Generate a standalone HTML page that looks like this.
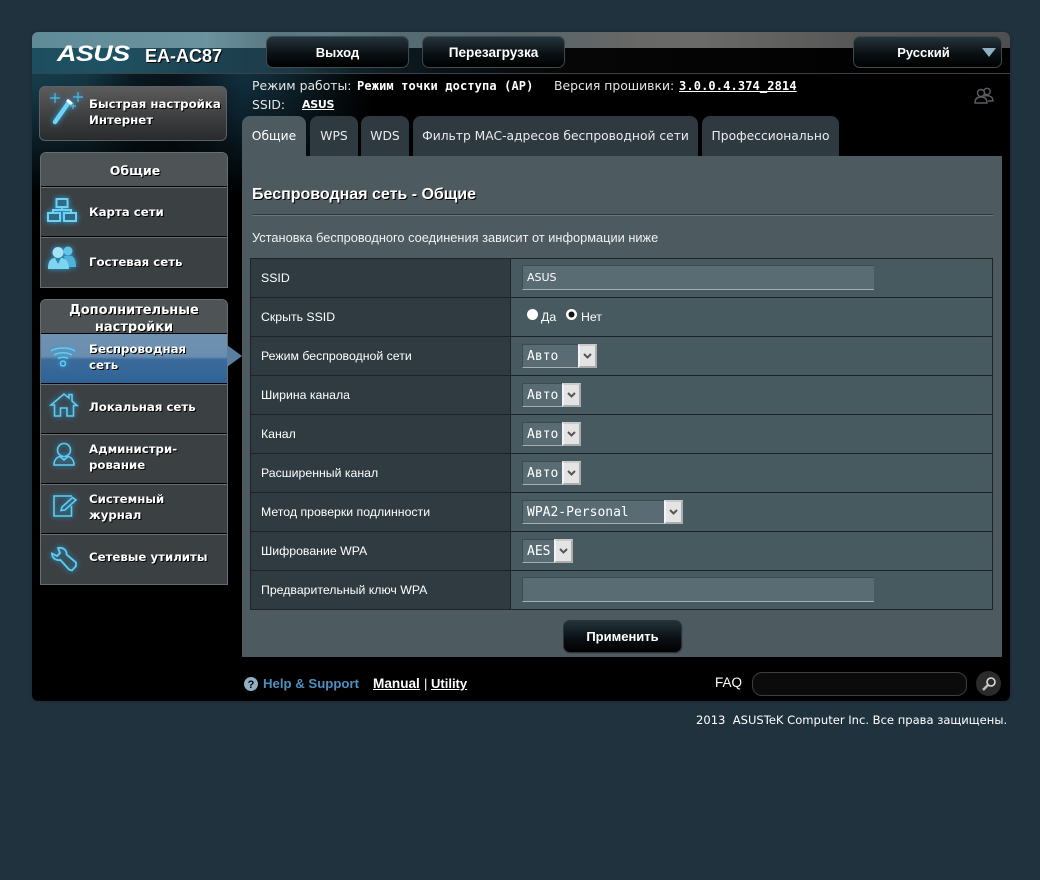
<!DOCTYPE html>
<html lang="ru"><head><meta charset="utf-8"><title>ASUS EA-AC87</title>
<style>
html,body{margin:0;padding:0;width:1040px;height:880px;overflow:hidden;background:#21323f}
body{position:relative;font-family:"Liberation Sans",sans-serif;color:#fff;font-size:12px}
.a{position:absolute;white-space:nowrap}
#wrap{position:absolute;left:32px;top:32px;width:978px;height:669px;background:#000;border-radius:6px;overflow:hidden;box-shadow:0 0 3px #1a2730}
#hdr{position:absolute;left:0;top:0;width:978px;height:41px;background:linear-gradient(90deg,#1c4e5f 0,#1f5263 8%,#1c4554 16%,#1d3d4a 24%,#1b3642 27%,#102229 33%,#0a1216 42%,#060606 55%,#000 100%)}
#hdr2{position:absolute;left:0;top:0;width:978px;height:16px;background:linear-gradient(90deg,#5f8b98 0,#6b929e 18%,#587680 25%,#5f7a83 30%,#566b72 38%,#566468 50%,#686866 62%,#6a6a68 68%,#565656 85%,#4f4f4f 100%)}
#glow{position:absolute;left:0;top:42px;width:340px;height:120px;background:linear-gradient(90deg,#163e4d 0,#143746 16%,#0a1a21 30%,#08141a 42%,#113040 62%,#0f2833 72%,#000 100%);-webkit-mask-image:linear-gradient(180deg,#000 0,rgba(0,0,0,.75) 30%,transparent 100%);mask-image:linear-gradient(180deg,#000 0,rgba(0,0,0,.75) 30%,transparent 100%)}
#line{position:absolute;left:0;top:41px;width:978px;height:1px;background:#3d4246}
.tb{position:absolute;top:36px;height:30px;border:1px solid #3d4a50;border-radius:7px;background:linear-gradient(180deg,#24343c 0,#0b1114 55%,#000 100%);text-align:center;line-height:31px;font-weight:bold;font-size:13px;color:#fff;box-sizing:content-box}
.mt{font:bold 11.75px/16px "DejaVu Sans",sans-serif;color:#fff;text-shadow:1px 1px 0 #000;position:absolute;white-space:nowrap}
.mh{font-size:13px}
.sep{position:absolute;left:41px;width:186px;height:1px;background:#000}
.sep2{position:absolute;left:41px;width:186px;height:1px;background:#6a6f72}
.tab{position:absolute;top:116px;height:40px;background:#2f3a40;border-radius:8px 8px 0 0;font:12.3px/40px "DejaVu Sans",sans-serif;color:#e8ecee;text-align:center}
.cellL{position:absolute;left:251px;width:259px;height:38px;background:#2f3b40}
.cellR{position:absolute;left:511px;width:481px;height:38px;background:#475a5f}
.lbl{position:absolute;left:261px;font:12.3px/14px "Liberation Sans",sans-serif;color:#fff;white-space:nowrap}
.sel{position:absolute;height:22px;background:#596c73;border-top:1px solid #3f4a4f;border-left:1px solid #3f4a4f;border-bottom:1px solid #a8aeb0;box-sizing:content-box;font:13px/24px "DejaVu Sans Mono",monospace;color:#fff;padding-left:4px}
.arr{position:absolute;top:-1px;right:0;width:19px;height:24px;background:#e4e4e4;border:2px solid #a9adae;border-top-color:#c9cccd;border-left-color:#f4f4f4;box-sizing:border-box}
.arr svg{position:absolute;left:3px;top:7px}
.inp{position:absolute;left:522px;width:352px;height:25px;box-sizing:border-box;background:#596c73;border-top:1px solid #3f4a4f;border-left:1px solid #3f4a4f;border-bottom:1px solid #a8aeb0}
svg{position:absolute;overflow:visible}
.ic{filter:drop-shadow(0 0 3px #2aa5e0)}
</style></head><body>
<div id="wrap"><div id="hdr"></div><div id="hdr2"></div><div id="glow"></div><div id="line"></div></div>

<!-- logo -->
<div class="a" style="left:57px;top:41px;font:italic bold 22px/26px 'Liberation Sans',sans-serif;transform:scaleX(1.22);transform-origin:left top;letter-spacing:-.4px;color:#fff">ASUS</div>
<div class="a" style="left:145px;top:45px;font:bold 18px/22px 'Liberation Sans',sans-serif;text-shadow:1px 1px 0 #000">EA-AC87</div>

<div class="tb" style="left:266px;width:141px">Выход</div>
<div class="tb" style="left:422px;width:141px;font-size:13.6px">Перезагрузка</div>
<div class="tb" style="left:853px;width:147px"><span style="margin-right:8px">Русский</span></div>
<svg style="left:982px;top:48px" width="14" height="9"><path d="M0 0H14L7 9Z" fill="#8fb0c4"/></svg>

<!-- status -->
<div class="a" style="left:252px;top:78px;font:12.4px/16px 'DejaVu Sans',sans-serif;color:#e6e6e6">Режим работы:</div>
<div class="a" style="left:357px;top:78px;font:bold 12px/16px 'DejaVu Sans Mono',monospace;color:#fff;letter-spacing:.13px">Режим точки доступа (AP)</div>
<div class="a" style="left:554px;top:78px;font:12.4px/16px 'DejaVu Sans',sans-serif;color:#e6e6e6">Версия прошивки:</div>
<div class="a" style="left:679px;top:78px;font:bold 12px/16px 'DejaVu Sans Mono',monospace;text-decoration:underline;letter-spacing:.13px">3.0.0.4.374_2814</div>
<div class="a" style="left:252px;top:97px;font:12.4px/16px 'DejaVu Sans',sans-serif;color:#e6e6e6">SSID:</div>
<div class="a" style="left:302px;top:97px;font:bold 11px/16px 'DejaVu Sans',sans-serif;text-decoration:underline;letter-spacing:-.3px">ASUS</div>
<svg style="left:974px;top:87px" width="20" height="18" fill="none" stroke="#5a5f62" stroke-width="1.4"><circle cx="13" cy="4.500" r="3.200"/><path d="M10 9C14 8 19 9 19 14H14"/><circle cx="7" cy="6" r="3.500" fill="#000"/><path d="M1 16C1 11 4 10 7 10S13 11 13 16Z" fill="#000"/></svg>

<!-- quick setup -->
<div class="a" style="left:39px;top:86px;width:186px;height:53px;border:1px solid #5c6163;border-radius:6px;background:linear-gradient(180deg,#5c5c5c 0,#3e3f40 55%,#2a2b2c 100%)"></div>
<svg class="ic" style="left:48px;top:90px" width="38" height="38"><path d="M7 32L21 12" stroke="#6fd3f5" stroke-width="4.500" stroke-linecap="round"/><path d="M19 10L24 14" stroke="#ffffff" stroke-width="3"/><path d="M7 3V13M2 8H12M30 2V12M25 7H35M25 13V19M22 16H28" stroke="#48bdea" stroke-width="1.200"/></svg>
<div class="mt" style="left:89px;top:96px">Быстрая настройка</div>
<div class="mt" style="left:89px;top:112px">Интернет</div>

<!-- menu 1 -->
<div class="a" style="left:40px;top:152px;width:186px;height:134px;background:#3b4043;border:1px solid #686d6f;border-radius:6px 6px 0 0"></div>
<div class="a" style="left:41px;top:153px;width:186px;height:33px;background:#4e5456;border-radius:6px 6px 0 0"></div>
<div class="sep" style="top:186px"></div><div class="sep2" style="top:187px"></div>
<div class="sep" style="top:236px"></div><div class="sep2" style="top:237px"></div>
<div class="mt" style="left:42px;width:186px;top:163px;text-align:center;font-size:12.5px">Общие</div>
<div class="mt" style="left:89px;top:204px">Карта сети</div>
<div class="mt" style="left:89px;top:254px">Гостевая сеть</div>
<svg class="ic" style="left:47px;top:198px" width="30" height="24" fill="none" stroke="#6fd0f2" stroke-width="2"><rect x="9.500" y="1" width="11" height="8" fill="#2f6a85"/><path d="M15 9V12M6 15V12H24V15"/><rect x="1" y="15" width="12" height="8" fill="#2f6a85"/><rect x="17" y="15" width="12" height="8" fill="#2f6a85"/></svg>
<svg class="ic" style="left:47px;top:246px" width="30" height="24"><circle cx="21" cy="5" r="4.500" fill="#63c4e6"/><path d="M17 10H25C28 12 29 16 29 21H20Z" fill="#4fb3d8"/><circle cx="11" cy="6.500" r="5.500" fill="#a5e3f7"/><path d="M1 23C1 15 4 12 8 12L11 18L14 12C18 12 22 15 22 23Z" fill="#7fd4f2"/></svg>

<!-- menu 2 -->
<div class="a" style="left:40px;top:299px;width:186px;height:284px;background:#3b4043;border:1px solid #686d6f;border-radius:6px 6px 0 0"></div>
<div class="a" style="left:41px;top:300px;width:186px;height:33px;background:#4e5456;border-radius:6px 6px 0 0"></div>
<div class="a" style="left:41px;top:300px;width:186px;height:33px;overflow:hidden"><div class="mt mh" style="left:0;width:186px;top:3px;text-align:center">Дополнительные</div><div class="mt mh" style="left:0;width:186px;top:20px;text-align:center">настройки</div></div>
<div class="sep" style="top:333px"></div>
<div class="a" style="left:41px;top:334px;width:186px;height:49px;background:linear-gradient(180deg,#6f92b2 0,#6b8eae 46%,#3c6b9b 52%,#2f6396 100%)"></div>
<svg style="left:227px;top:345px" width="15" height="22"><path d="M0 0L15 11L0 22Z" fill="#5a7f9f"/></svg>
<div class="sep" style="top:383px"></div><div class="sep2" style="top:384px"></div>
<div class="sep" style="top:433px"></div><div class="sep2" style="top:434px"></div>
<div class="sep" style="top:483px"></div><div class="sep2" style="top:484px"></div>
<div class="sep" style="top:533px"></div><div class="sep2" style="top:534px"></div>
<div class="mt" style="left:89px;top:341px">Беспроводная</div>
<div class="mt" style="left:89px;top:357px">сеть</div>
<svg class="ic" style="left:50px;top:347px" width="26" height="20" fill="none" stroke="#5fcdf2" stroke-width="1.600"><path d="M1 4C7 0 19 0 25 4"/><path d="M4 8C9 5 17 5 22 8"/><path d="M8 11.500C11 10 15 10 18 11.500"/><circle cx="13" cy="16.500" r="2.500"/></svg>
<div class="mt" style="left:89px;top:399px">Локальная сеть</div>
<svg class="ic" style="left:50px;top:393px" width="28" height="24" fill="none" stroke="#5fcdf2" stroke-width="1.600"><path d="M1 12L14 1L19 5V1.500H22V8L27 12.500H23.500V23H17V15H10.500V23H4.500V12Z"/></svg>
<div class="mt" style="left:89px;top:441px">Администри-</div>
<div class="mt" style="left:89px;top:457px">рование</div>
<svg class="ic" style="left:53px;top:443px" width="22" height="24" fill="none" stroke="#5fcdf2" stroke-width="1.600"><ellipse cx="11" cy="7" rx="6.500" ry="6.500"/><path d="M1 22C1 18 3 14.500 7 13.500L11 17L15 13.500C19 14.500 21 18 21 22Z"/></svg>
<div class="mt" style="left:89px;top:491px">Системный</div>
<div class="mt" style="left:89px;top:507px">журнал</div>
<svg class="ic" style="left:53px;top:495px" width="25" height="23" fill="none" stroke="#5fcdf2" stroke-width="1.600"><path d="M19 1H1V21H18.500V11"/><path d="M8 15.500L9 12L19.500 2.500L23 5L12 15Z"/></svg>
<div class="mt" style="left:89px;top:549px">Сетевые утилиты</div>
<svg class="ic" style="left:51px;top:547px" width="27" height="25" fill="none" stroke="#5fcdf2" stroke-width="1.800"><path d="M7 1C12 0 16 3 15.500 7.500L25 15.500V19L21 23.500L18 22.500L9.500 13C5 14 1 11 1 6.500L6 9L9 6Z"/></svg>

<!-- tabs -->
<div class="tab" style="left:242px;width:64px;background:#4d5a5f;color:#fff">Общие</div>
<div class="tab" style="left:310px;width:48px">WPS</div>
<div class="tab" style="left:361px;width:48px">WDS</div>
<div class="tab" style="left:413px;width:285px">Фильтр MAC-адресов беспроводной сети</div>
<div class="tab" style="left:702px;width:137px">Профессионально</div>

<!-- panel -->
<div class="a" style="left:242px;top:156px;width:760px;height:501px;background:#4d5a5f"></div>
<div class="a" style="left:252px;top:185px;font:bold 16px/20px 'Liberation Sans',sans-serif;text-shadow:1px 1px 0 #000">Беспроводная сеть - Общие</div>
<div class="a" style="left:252px;top:214px;width:741px;height:1px;background:#2f383c;border-bottom:1px solid #6d777b"></div>
<div class="a" style="left:252px;top:231px;font:12.8px/14px 'Liberation Sans',sans-serif;color:#f2f2f2">Установка беспроводного соединения зависит от информации ниже</div>

<!-- table -->
<div class="a" style="left:250px;top:258px;width:743px;height:352px;background:#1d2326"></div>
<div class="cellL" style="top:259px"></div><div class="cellR" style="top:259px"></div>
<div class="cellL" style="top:298px"></div><div class="cellR" style="top:298px"></div>
<div class="cellL" style="top:337px"></div><div class="cellR" style="top:337px"></div>
<div class="cellL" style="top:376px"></div><div class="cellR" style="top:376px"></div>
<div class="cellL" style="top:415px"></div><div class="cellR" style="top:415px"></div>
<div class="cellL" style="top:454px"></div><div class="cellR" style="top:454px"></div>
<div class="cellL" style="top:493px"></div><div class="cellR" style="top:493px"></div>
<div class="cellL" style="top:532px"></div><div class="cellR" style="top:532px"></div>
<div class="cellL" style="top:571px"></div><div class="cellR" style="top:571px"></div>

<div class="lbl" style="top:271px">SSID</div>
<div class="lbl" style="top:310px">Скрыть SSID</div>
<div class="lbl" style="top:349px">Режим беспроводной сети</div>
<div class="lbl" style="top:388px">Ширина канала</div>
<div class="lbl" style="top:427px">Канал</div>
<div class="lbl" style="top:466px">Расширенный канал</div>
<div class="lbl" style="top:505px">Метод проверки подлинности</div>
<div class="lbl" style="top:544px">Шифрование WPA</div>
<div class="lbl" style="top:583px">Предварительный ключ WPA</div>

<div class="inp" style="top:265px;font:11px/23px 'DejaVu Sans',sans-serif;color:#fff;padding-left:4px">ASUS</div>
<div class="inp" style="top:577px"></div>

<svg style="left:527px;top:309px" width="50" height="12"><circle cx="5.500" cy="5.500" r="5.500" fill="#fff"/><circle cx="44.500" cy="5.500" r="5.500" fill="#fff"/><circle cx="44.500" cy="5.500" r="3" fill="#111"/></svg>
<div class="a" style="left:541px;top:310px;font:12.3px/14px 'Liberation Sans',sans-serif">Да</div>
<div class="a" style="left:581px;top:310px;font:12.3px/14px 'Liberation Sans',sans-serif">Нет</div>

<div class="sel" style="left:522px;top:344px;width:70px">Авто<div class="arr"><svg width="9" height="6"><path d="M1 1L4.500 4.500L8 1" fill="none" stroke="#555" stroke-width="2"/></svg></div></div>
<div class="sel" style="left:522px;top:383px;width:54px">Авто<div class="arr"><svg width="9" height="6"><path d="M1 1L4.500 4.500L8 1" fill="none" stroke="#555" stroke-width="2"/></svg></div></div>
<div class="sel" style="left:522px;top:422px;width:54px">Авто<div class="arr"><svg width="9" height="6"><path d="M1 1L4.500 4.500L8 1" fill="none" stroke="#555" stroke-width="2"/></svg></div></div>
<div class="sel" style="left:522px;top:461px;width:54px">Авто<div class="arr"><svg width="9" height="6"><path d="M1 1L4.500 4.500L8 1" fill="none" stroke="#555" stroke-width="2"/></svg></div></div>
<div class="sel" style="left:522px;top:500px;width:156px">WPA2-Personal<div class="arr"><svg width="9" height="6"><path d="M1 1L4.500 4.500L8 1" fill="none" stroke="#555" stroke-width="2"/></svg></div></div>
<div class="sel" style="left:522px;top:539px;width:46px">AES<div class="arr"><svg width="9" height="6"><path d="M1 1L4.500 4.500L8 1" fill="none" stroke="#555" stroke-width="2"/></svg></div></div>

<!-- apply -->
<div class="a" style="left:563px;top:620px;width:117px;height:31px;border:1px solid #2e3436;border-radius:7px;background:linear-gradient(180deg,#22333b 0,#0a1114 55%,#000 100%);text-align:center;font:bold 13px/31px 'Liberation Sans',sans-serif;box-shadow:1px 1px 0 #454f53">Применить</div>

<!-- footer -->
<svg style="left:244px;top:677px" width="14" height="14"><circle cx="7" cy="7" r="7" fill="#8fb0c0"/><text x="7" y="11" font-family="Liberation Sans" font-weight="bold" font-size="11" text-anchor="middle" fill="#000">?</text></svg>
<div class="a" style="left:263px;top:675px;font:bold 13.2px/17px 'Liberation Sans',sans-serif;color:#4f8fc0">Help &amp; Support</div>
<div class="a" style="left:373px;top:675px;font:bold 13.6px/17px 'Liberation Sans',sans-serif;text-decoration:underline">Manual</div>
<div class="a" style="left:424px;top:675px;font:13px/17px 'Liberation Sans',sans-serif">|</div>
<div class="a" style="left:431px;top:675px;font:bold 13px/17px 'Liberation Sans',sans-serif;text-decoration:underline">Utility</div>
<div class="a" style="left:715px;top:674px;font:13.5px/17px 'Liberation Sans',sans-serif">FAQ</div>
<div class="a" style="left:752px;top:672px;width:213px;height:22px;border:1px solid #3a3f42;border-radius:10px;background:#0b0b0b"></div>
<div class="a" style="left:976px;top:671px;width:25px;height:25px;border-radius:50%;background:#2b2b2b"></div>
<svg style="left:981px;top:676px" width="16" height="16" fill="none"><circle cx="10" cy="6" r="4" stroke="#ddd" stroke-width="1.600"/><path d="M7 9L2 14" stroke="#bbb" stroke-width="2.600"/></svg>
<div class="a" style="left:696px;top:713px;font:11.55px/14px 'DejaVu Sans',sans-serif;color:#fff">2013&nbsp; ASUSTeK Computer Inc. Все права защищены.</div>
</body></html>
